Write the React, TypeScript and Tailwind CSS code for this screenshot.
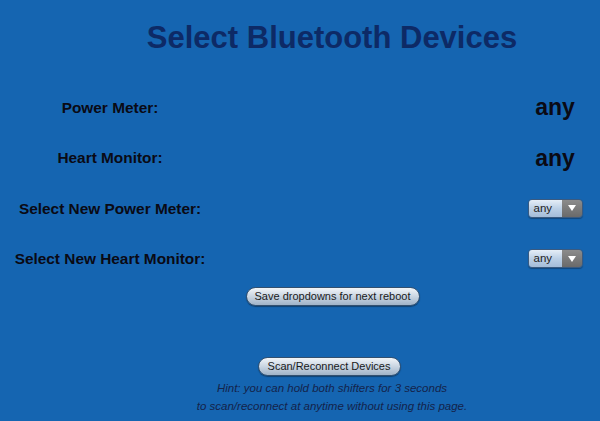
import React from "react";

function Dropdown() {
  return (
    <div className="flex h-[19px] w-[55px] overflow-hidden rounded-[4px] border border-[#3a5a80] shadow-[0_1px_1px_rgba(0,0,0,0.3)]">
      <div className="flex flex-1 items-center bg-gradient-to-b from-[#e6eef7] via-[#bcd0e6] to-[#a4bcd8] pl-[5px] text-[11.5px] text-[#222]">any</div>
      <div className="flex w-[20px] items-center justify-center bg-gradient-to-b from-[#8c8c8c] to-[#6a6a6a]">
        <svg width="8" height="6" viewBox="0 0 8 6"><path d="M0 0h8L4 6z" fill="#fff" /></svg>
      </div>
    </div>
  );
}

function Pill({ children, className }: { children: React.ReactNode; className: string }) {
  return (
    <div className={"flex h-[19px] items-center justify-center rounded-full border border-[#33506f] bg-gradient-to-b from-[#f2f5f8] via-[#c9d5e2] to-[#9fb3c8] text-[11px] text-[#1a1a1a] shadow-[0_1px_1px_rgba(0,0,0,0.35)] " + className}>
      {children}
    </div>
  );
}

export default function App() {
  const rows: { label: string; right: React.ReactNode }[] = [
    { label: "Power Meter:", right: <span className="text-[23px] font-bold text-[#0a0a14]">any</span> },
    { label: "Heart Monitor:", right: <span className="text-[23px] font-bold text-[#0a0a14]">any</span> },
    { label: "Select New Power Meter:", right: <Dropdown /> },
    { label: "Select New Heart Monitor:", right: <Dropdown /> },
  ];
  return (
    <div className="flex h-[421px] w-[600px] flex-col bg-[#1565b1] font-['Liberation_Sans',Arial,sans-serif]">
      <div className="mt-[19px] flex h-[38px] items-center justify-center pl-[64px] text-[31px] font-bold text-[#0d2a66]">
        Select Bluetooth Devices
      </div>
      <div className="mt-[25px] flex flex-col">
        {rows.map((r) => (
          <div key={r.label} className="flex h-[50.5px] items-center">
            <div className="w-[220px] text-center text-[15.4px] font-bold text-[#0a0a14]">{r.label}</div>
            <div className="flex-1" />
            <div className="flex w-[90px] justify-center">{r.right}</div>
          </div>
        ))}
      </div>
      <div className="mt-[3px] flex justify-center pl-[65px]">
        <Pill className="w-[174px]">Save dropdowns for next reboot</Pill>
      </div>
      <div className="mt-[51px] flex justify-center pl-[58px]">
        <Pill className="w-[143px]">Scan/Reconnect Devices</Pill>
      </div>
      <div className="mt-[3px] flex flex-col items-center pl-[64px] text-[11.5px] italic leading-[18px] text-[#14234a]">
        <div>Hint: you can hold both shifters for 3 seconds</div>
        <div>to scan/reconnect at anytime without using this page.</div>
      </div>
    </div>
  );
}
